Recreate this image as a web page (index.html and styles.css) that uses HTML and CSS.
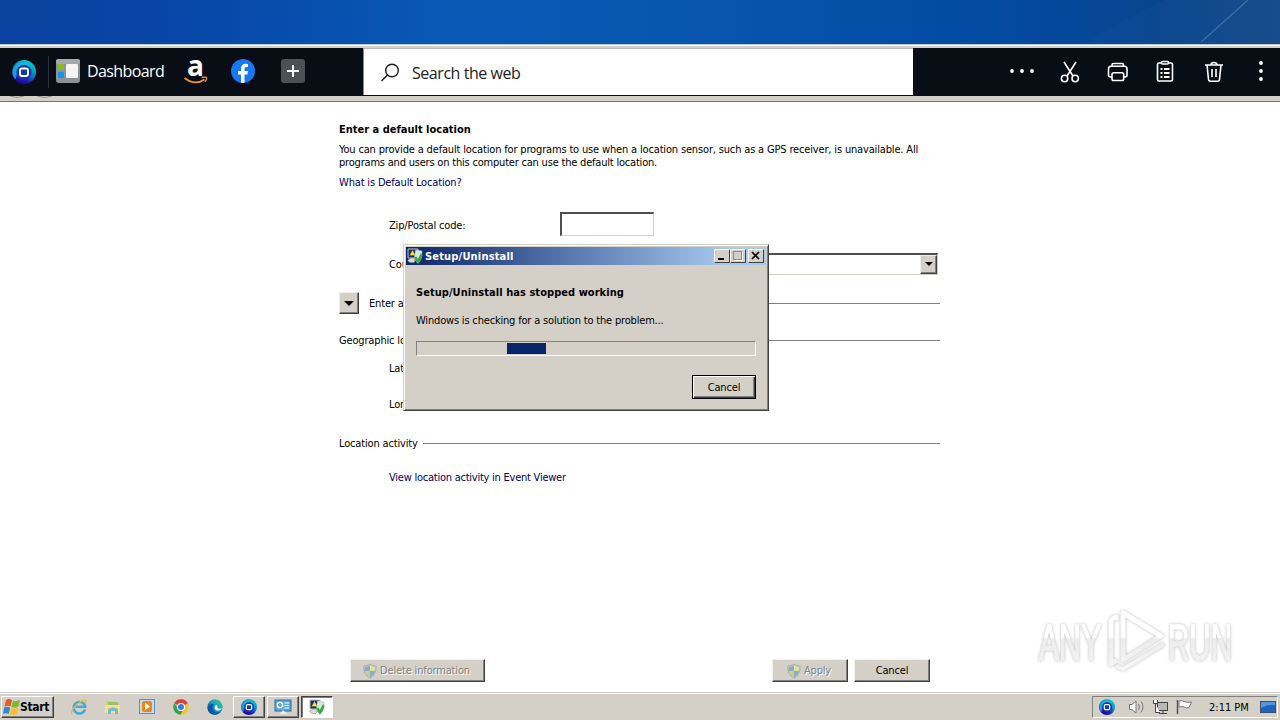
FILE: index.html
```html
<!DOCTYPE html>
<html lang="en">
<head>
    <meta charset="UTF-8">
    <meta name="viewport" content="width=device-width, initial-scale=1.0">
    <title>Default Location</title>
    <link rel="stylesheet" href="styles.css">
</head>
<body>
    <!-- shared icons -->
    <svg class="defs" width="0" height="0">
        <defs>
            <linearGradient id="ring" x1="0.8" y1="0" x2="0.3" y2="1">
                <stop offset="0" stop-color="#08d5cd"/>
                <stop offset="0.5" stop-color="#087fc2"/>
                <stop offset="0.8" stop-color="#2414a8"/>
                <stop offset="1" stop-color="#180888"/>
            </linearGradient>
            <linearGradient id="edge-g" x1="0" y1="1" x2="1" y2="0">
                <stop offset="0" stop-color="#0b58b0"/>
                <stop offset="0.5" stop-color="#1596c8"/>
                <stop offset="1" stop-color="#52cf72"/>
            </linearGradient>
            <linearGradient id="mark-g" gradientUnits="userSpaceOnUse" x1="0" y1="4" x2="0" y2="68">
                <stop offset="0.46" stop-color="#ffffff"/>
                <stop offset="0.48" stop-color="#ececec"/>
                <stop offset="1" stop-color="#f6f6f6"/>
            </linearGradient>
        </defs>
        <symbol id="browser" viewBox="0 0 24 24">
            <circle cx="12" cy="12" r="12" fill="url(#ring)"/>
            <path d="M0.500 14C0 4 12 -2 20 6C12 3 5 8 4 19C2 18 1 16 0.500 14Z" fill="#1fb4e0" opacity="0.8"/>
            <circle cx="12" cy="12.500" r="7.500" fill="#1532ab"/>
            <rect x="8" y="8.500" width="8" height="7.500" rx="2" fill="#1238a8" stroke="#fff" stroke-width="1.900"/>
        </symbol>
        <symbol id="shield" viewBox="0 0 16 16">
            <path d="M8 1C6 2.500 4 3 2 3C1.500 9 4 13 8 15C12 13 14.500 9 14 3C12 3 10 2.500 8 1Z" fill="#c5c9c4" stroke="#a9aca8"/>
            <path d="M8 2.500V8H3V4C5 4 7 3 8 2.500Z" fill="#88abc6"/>
            <path d="M8 8H13C12.500 11 10.500 12.800 8 14Z" fill="#88abc6"/>
            <path d="M8 2.500V8H13V4C11 4 9 3 8 2.500Z" fill="#dde2a0"/>
            <path d="M8 8H3C3.500 11 5.500 12.800 8 14Z" fill="#bfd58b"/>
        </symbol>
        <symbol id="setup" viewBox="0 0 16 16">
            <path d="M1 1H11V10H1Z" fill="#14286a" stroke="#c3c6cf"/>
            <path d="M0.500 12.500L4 10H9L7 14.500H3Z" fill="#dedccf" stroke="#8d8d83" stroke-width="0.600"/>
            <path d="M5.500 2L8.500 7.500H2.500Z" fill="#ffe13a" stroke="#5a4c00" stroke-width="0.400"/>
            <path d="M8.500 2Q12 2 15 3V8Q14 13 11 15.500Q8 13 7.500 9Z" fill="#d6eadb" stroke="#9dbba5" stroke-width="0.500"/>
            <path d="M7 9.500L9.500 8.500L10.800 11L14 5L15.500 7Q14.500 12 11 15.500Q8.500 13 7 9.500Z" fill="#3da64c"/>
        </symbol>
    </svg>

    <div class="wallpaper">
        <svg width="1280" height="44" viewBox="0 0 1280 44">
            <path d="M1085 44Q1120 20 1165 0H1280V44Z" fill="#fff" opacity="0.02"/>
            <path d="M1201 42Q1226 20 1248 0" fill="none" stroke="#6f9fcb" stroke-width="1.500" opacity="0.4"/>
        </svg>
    </div>
    <div class="window-edge"></div>

    <div class="toolbar">
        <div class="toolbar-left">
            <svg class="logo" width="24" height="24"><use href="#browser"/></svg>
            <span class="separator"></span>
            <svg class="dash-icon" width="24" height="24" viewBox="0 0 24 24">
                <rect width="24" height="24" rx="3" fill="#8d9299"/>
                <rect width="24" height="5" rx="2" fill="#a5a9af"/>
                <rect x="2" y="5" width="6" height="6" rx="1" fill="#84bd1d"/>
                <rect x="2" y="13" width="6" height="6" rx="1" fill="#1495ed"/>
                <rect x="10" y="5" width="12" height="14" rx="1" fill="#f5f4f2"/>
            </svg>
            <span class="dashboard">Dashboard</span>
            <svg class="amazon" width="24" height="48" viewBox="0 -11 24 48">
                <text x="3" y="16.500" class="amazon-letter" textLength="17" lengthAdjust="spacingAndGlyphs">a</text>
                <path d="M0.500 19Q11 27 20.500 20.500" fill="none" stroke="#f0981e" stroke-width="1.700"/>
                <path d="M17.500 18.500Q22.500 17.700 22.700 18.900Q22.800 20.700 21 22.700" fill="none" stroke="#f0981e" stroke-width="1.300"/>
            </svg>
            <svg class="facebook" width="24" height="24" viewBox="0 0 24 24">
                <circle cx="12" cy="12" r="12" fill="#1877f2"/>
                <path d="M10 24V15.500H7V12H10V9.500C10 6.300 11.800 4.700 14.700 4.700L17 4.900V8H15.400C13.900 8 13.500 8.900 13.500 9.900V12H17L16.400 15.500H13.500V24Z" fill="#fff"/>
            </svg>
            <svg class="add" width="24" height="24" viewBox="0 0 24 24">
                <rect width="24" height="24" rx="3" fill="#4c5057"/>
                <path d="M12 6V18M6 12H18" stroke="#fff" stroke-width="2"/>
            </svg>
        </div>
        <div class="search">
            <svg width="20" height="20" viewBox="0 0 20 20" fill="none" stroke="#1a1a1a" stroke-width="1.400">
                <circle cx="12" cy="7.500" r="6.300"/>
                <path d="M7.500 12L1.500 18"/>
            </svg>
            <span>Search the web</span>
        </div>
        <div class="toolbar-right">
            <svg width="26" height="24" viewBox="0 0 26 24" fill="#fff">
                <circle cx="3" cy="11" r="1.900"/><circle cx="13" cy="11" r="1.900"/><circle cx="23" cy="11" r="1.900"/>
            </svg>
            <svg class="cut" width="20" height="24" viewBox="0 0 20 24" fill="none" stroke="#fff" stroke-width="1.600">
                <path d="M4 2L13 16M16 2L7 16"/>
                <circle cx="4.600" cy="18.500" r="3.200"/>
                <circle cx="15.200" cy="18.500" r="3.200"/>
            </svg>
            <svg class="print" width="22" height="24" viewBox="0 0 22 24" fill="none" stroke="#fff" stroke-width="1.600">
                <path d="M5 6V5Q5 3.500 6.500 3.500H15Q16.500 3.500 16.500 5V6"/>
                <path d="M5 17H3.500Q1.500 17 1.500 15V9Q1.500 6.200 4 6.200H17.500Q20 6.200 20 9V15Q20 17 18 17H16.700"/>
                <rect x="5" y="12.800" width="11.700" height="7.700" rx="1.800"/>
            </svg>
            <svg class="paste" width="18" height="24" viewBox="0 0 18 24" fill="none" stroke="#fff" stroke-width="1.600">
                <rect x="1.500" y="3" width="15" height="18" rx="1.500"/>
                <rect x="5.500" y="1.500" width="7" height="2.500" rx="1" fill="#090d16"/>
                <path d="M4.500 9H6.500M4.500 13H6.500M4.500 17H6.500M8 9H13.500M8 13H13.500M8 17H13.500" stroke-width="1.800"/>
            </svg>
            <svg class="trash" width="20" height="24" viewBox="0 0 20 24" fill="none" stroke="#fff" stroke-width="1.600">
                <path d="M1 5H19M7 5Q7 2.500 10 2.500Q13 2.500 13 5M3 5L4.500 19.500Q4.700 21.300 6.500 21.300H13.500Q15.300 21.300 15.500 19.500L17 5M8 9V17M12 9V17"/>
            </svg>
            <svg class="more" width="6" height="24" viewBox="0 0 6 24" fill="#fff">
                <circle cx="3" cy="3" r="1.900"/><circle cx="3" cy="11" r="1.900"/><circle cx="3" cy="19" r="1.900"/>
            </svg>
        </div>
    </div>

    <div class="nav-strip">
        <svg width="60" height="4" viewBox="0 0 60 4" fill="none" stroke="#8b8b87">
            <path d="M10 0Q17 3 24 0M37 0Q45 3 52 0"/>
        </svg>
    </div>

    <div class="page">
        <h1>Enter a default location</h1>
        <p class="description">You can provide a default location for programs to use when a location sensor, such as a GPS receiver, is unavailable. All<br><span class="line-two">programs and users on this computer can use the default location.</span></p>
        <a class="help-link">What is Default Location?</a>

        <div class="form">
            <div class="field zip"><label>Zip/Postal code:</label><span class="text-box"></span></div>
            <div class="field country"><label>Country:</label><span class="combo"><span class="combo-button"><i class="arrow"></i></span></span></div>
            <div class="section"><span class="expander"><i class="arrow big"></i></span><span>Enter address</span><hr></div>
            <div class="section"><span>Geographic location</span><hr></div>
            <div class="field"><label>Latitude:</label></div>
            <div class="field"><label>Longitude:</label></div>
            <div class="section"><span class="activity">Location activity</span><hr></div>
            <div class="field"><a class="event-link">View location activity in Event Viewer</a></div>
        </div>

        <div class="actions">
            <div class="button disabled delete"><svg width="16" height="16"><use href="#shield"/></svg><span>Delete information</span></div>
            <div class="button disabled apply"><svg width="16" height="16"><use href="#shield"/></svg><span>Apply</span></div>
            <div class="button cancel"><span>Cancel</span></div>
        </div>
    </div>

    <div class="taskbar">
        <div class="start">
            <svg width="18" height="18" viewBox="0 0 18 18">
                <path d="M4 2Q7 0 10 2L8.500 8.500Q6 7 2.500 8.500Z" fill="#ea5a24"/>
                <path d="M11 2.500Q14 4 18 2L16.500 8.500Q13 10.500 9.500 9Z" fill="#7fb832"/>
                <path d="M2.200 9.500Q5.500 8 8.200 9.800L6.700 16Q4 14.500 1 15.800Z" fill="#3388d5"/>
                <path d="M9.200 10Q12.500 11.500 16.200 9.600L14.700 16Q11 17.700 7.700 16.200Z" fill="#f8c02c"/>
            </svg>
            <span>Start</span>
        </div>
        <div class="quick">
            <svg width="18" height="18" viewBox="0 0 18 18">
                <path d="M15 11.500A5.800 5.800 0 1 1 15.200 8.800H5.500" fill="none" stroke="#43a9df" stroke-width="2.500"/>
                <path d="M2.500 15.500Q0 16 3 11Q8 4 14.500 2.200Q17.500 2 15.500 5" fill="none" stroke="#e8b83b" stroke-width="1.200"/>
            </svg>
            <svg width="18" height="18" viewBox="0 0 18 18">
                <path d="M2 3H7L8 5H15V14H2Z" fill="#e8c766"/>
                <path d="M4 4H14V8H4Z" fill="#93c46b"/>
                <path d="M1 7H16V15H1Z" fill="#f6e08f"/>
                <path d="M4 16V11Q9 8 14 11V16H11V13H7V16Z" fill="#75b7de"/>
            </svg>
            <svg width="18" height="18" viewBox="0 0 18 18">
                <rect x="1.500" y="1.500" width="15" height="14" fill="#bfdcef" stroke="#5c91bd"/>
                <rect x="4" y="3" width="10" height="11" rx="2" fill="#ef8518"/>
                <path d="M7 5L12 8.500L7 12Z" fill="#fff"/>
            </svg>
            <svg width="18" height="18" viewBox="0 0 18 18">
                <circle cx="9" cy="9" r="7.700" fill="#f6c522"/>
                <path d="M9 9L2.200 5.200A7.700 7.700 0 0 1 15.800 5.300Z" fill="#dc4036"/>
                <path d="M2.300 5.200A7.700 7.700 0 0 0 8.500 16.700L12 10.500L9 9H5Z" fill="#35a153"/>
                <circle cx="9" cy="9" r="4" fill="#fff"/><circle cx="9" cy="9" r="3" fill="#3879e4"/>
            </svg>
            <svg width="18" height="18" viewBox="0 0 18 18">
                <circle cx="9" cy="9" r="7.700" fill="url(#edge-g)"/>
                <path d="M1.500 10Q3 5 8 6Q5 9 8 13Q10 16 15 13Q12 17 8 16.700Q2 16 1.500 10Z" fill="#0c57a6"/>
                <path d="M9 8Q11 6 11.500 8.500Q11 11 16 10.500Q13 14 9.500 12Q7.500 10 9 8Z" fill="#d5eee4"/>
            </svg>
        </div>
        <div class="tasks">
            <div class="task"><svg width="16" height="16"><use href="#browser"/></svg></div>
            <div class="task">
                <svg width="18" height="16" viewBox="0 0 18 16">
                    <rect x="1" y="1" width="16" height="11" fill="#5ba8dc" stroke="#2b6c9f"/>
                    <circle cx="6" cy="6" r="2.700" fill="none" stroke="#fff" stroke-width="1.300"/>
                    <path d="M10.500 4H15M10.500 6.500H15M10.500 9H15" stroke="#fff"/>
                    <path d="M6 15L9 11L13 15Z" fill="#e8f0f4"/>
                </svg>
            </div>
            <div class="task active"><svg width="16" height="16"><use href="#setup"/></svg></div>
        </div>
        <div class="tray">
            <svg width="16" height="16"><use href="#browser"/></svg>
            <svg class="volume" width="18" height="16" viewBox="0 0 18 16" fill="none" stroke="#77777a">
                <path d="M1.500 5.500H4L8 2V14L4 10.500H1.500Z" fill="#fff"/>
                <path d="M10.500 5Q12.500 8 10.500 11M13 2.500Q17 8 13 13.500"/>
            </svg>
            <svg class="network" width="17" height="16" viewBox="0 0 17 16">
                <rect x="5.500" y="3.500" width="10" height="8" fill="#b8b8b8" stroke="#454545"/>
                <path d="M7 14.500H15M11 12V14" stroke="#454545"/>
                <path d="M1.500 1V4.500H5.500V1M3.500 4.500V13.500H8" fill="#fff" stroke="#444"/>
            </svg>
            <svg width="17" height="16" viewBox="0 0 17 16">
                <path d="M1.500 1V15" stroke="#555" stroke-width="1.500"/>
                <path d="M3 2Q6 1 8 2.500Q11 4 15.500 3L13 8.500Q10 9.500 8 8Q6 7 3 8Z" fill="#fff" stroke="#77777a"/>
            </svg>
            <span class="clock">2:11 PM</span>
            <svg class="show-desktop" width="16" height="14" viewBox="0 0 16 14">
                <rect x="0.500" y="1.500" width="15" height="11" fill="#1e63bd" stroke="#3d4f69"/>
                <path d="M1 2H15V5Q8 4 1 8Z" fill="#529add"/>
            </svg>
        </div>
    </div>

    <div class="dialog">
        <div class="title-bar">
            <svg width="16" height="16"><use href="#setup"/></svg>
            <span class="title">Setup/Uninstall</span>
            <span class="caption-button"><svg width="12" height="10"><path d="M2 8H8" stroke="#000" stroke-width="2"/></svg></span>
            <span class="caption-button max"><svg width="12" height="10" fill="none" stroke="#8b8b87"><rect x="1.500" y="0.500" width="8" height="8"/><path d="M2.500 9.500H10.500V1" stroke="#fff"/></svg></span>
            <span class="caption-button close"><svg width="12" height="10"><path d="M2 1L9 8M9 1L2 8" stroke="#000" stroke-width="1.700"/></svg></span>
        </div>
        <div class="dialog-body">
            <div class="dialog-heading">Setup/Uninstall has stopped working</div>
            <div class="dialog-text">Windows is checking for a solution to the problem...</div>
            <div class="progress"><div class="progress-block"></div></div>
            <div class="button default"><span>Cancel</span></div>
        </div>
    </div>

    <svg class="watermark" width="210" height="74" viewBox="0 0 210 74">
        <g class="mark-text">
            <text x="9" y="56" textLength="62" lengthAdjust="spacingAndGlyphs">ANY</text>
            <text x="138" y="56" textLength="64" lengthAdjust="spacingAndGlyphs">RUN</text>
        </g>
        <g class="mark-logo" fill="none" stroke="url(#mark-g)" stroke-width="5" stroke-linejoin="round">
            <path d="M88 13L84 14Q81 15 81 19V60L87 56"/>
            <path d="M93 9V56L131 32Z"/>
            <path d="M86 62L93 65L134 40" stroke-width="4"/>
        </g>
    </svg>
</body>
</html>
```
FILE: styles.css
```css
* {
    box-sizing: border-box;
}
body {
    display: flex;
    flex-direction: column;
    width: 1280px;
    height: 720px;
    margin: 0;
    overflow: hidden;
    background-color: #fff;
    font-family: "DejaVu Sans Condensed", "DejaVu Sans", sans-serif;
    font-size: 11px;
    letter-spacing: -0.16px;
    color: #000;
    white-space: nowrap;
}
svg {
    display: block;
    flex: none;
}
.defs {
    position: absolute;
}
.wallpaper {
    flex: none;
    height: 44px;
    background: linear-gradient(90deg, #0b429f 0%, #0747a7 15%, #0959b5 35%, #0858b0 50%, #034aa1 78%, #08458f 90%, #134a87 100%);
}
.window-edge {
    flex: none;
    height: 4px;
    background-color: #d4d0c8;
    border-top: 1px solid #b9c9d8;
    box-shadow: inset 0 1px 0 #fff;
}

/* Browser toolbar */
.toolbar {
    display: flex;
    flex: none;
    height: 48px;
    background-color: #090d16;
    font-family: "Open Sans", "Noto Sans", sans-serif;
    font-size: 16px;
    color: #fff;
}
.toolbar-left {
    display: flex;
    align-items: center;
    width: 363px;
    padding-left: 12px;
}
.separator {
    width: 1px;
    height: 32px;
    margin: 0 7px 0 12px;
    background-color: #2b303a;
}
.dash-icon {
    margin-top: -2px;
}
.dashboard {
    width: 77px;
    margin: -2px 0 0 7px;
    letter-spacing: -0.6px;
}
.amazon {
    margin-left: 20px;
    overflow: visible;
}
.amazon-letter {
    font: bold 29px "Open Sans", sans-serif;
    letter-spacing: 0;
    fill: #fff;
}
.facebook {
    margin: -2px 0 0 23px;
}
.add {
    margin: -2px 0 0 26px;
}
.search {
    display: flex;
    align-items: center;
    gap: 12px;
    width: 550px;
    height: 47px;
    padding: 1px 0 0 16px;
    background-color: #fff;
    border-top: 1px solid #bbb;
    border-left: 1px solid #888;
    color: #222;
    letter-spacing: -0.45px;
}
.toolbar-right {
    display: flex;
    flex: 1;
    align-items: center;
    padding-left: 96px;
}
.cut {
    margin-left: 25px;
}
.print {
    margin-left: 27px;
}
.paste {
    margin-left: 27px;
}
.trash {
    margin-left: 30px;
}
.more {
    margin-left: 34px;
}
.nav-strip {
    flex: none;
    height: 6px;
    background-color: #d4d0c8;
    border-bottom: 1px solid #777570;
}

/* Default location page */
.page {
    display: flex;
    flex: 1;
    flex-direction: column;
    width: 940px;
    padding: 21px 0 0 339px;
}
h1 {
    margin: 0;
    font-size: 11px;
    line-height: 14px;
    letter-spacing: 0;
}
.description {
    margin: 6px 0 7px;
    line-height: 13px;
}
.line-two {
    letter-spacing: -0.2px;
}
.help-link,
.event-link {
    color: #000066;
}
.help-link {
    line-height: 14px;
}
.event-link {
    letter-spacing: -0.24px;
}
.form {
    display: grid;
    grid-template-rows: 39px 39px 40px 34px 22px 50px 28px 40px;
    margin-top: 15px;
}
.field {
    display: flex;
    align-items: center;
    padding-left: 50px;
}
.field label {
    width: 171px;
}
.zip label,
.country label {
    padding-top: 2px;
}
.text-box,
.combo {
    height: 24px;
    border: 1px solid #d4d0c8;
    border-top: 2px solid #504e4b;
    border-left: 2px solid #504e4b;
}
.text-box {
    width: 94px;
    margin-bottom: 1px;
}
.combo {
    display: flex;
    justify-content: flex-end;
    width: 378px;
    height: 22px;
}
.combo-button,
.expander {
    display: flex;
    align-items: center;
    justify-content: center;
    background-color: #d4d0c8;
    border: 1px solid #f0eeea;
    border-right-color: #404040;
    border-bottom-color: #404040;
    box-shadow: inset -1px -1px 0 #808080;
}
.combo-button {
    width: 17px;
}
.expander {
    width: 20px;
    height: 22px;
    margin-right: 10px;
}
.arrow {
    border: 4px solid transparent;
    border-top-color: #000;
    border-bottom: 0;
}
.arrow.big {
    border-width: 5px 5px 0;
}
.section {
    display: flex;
    align-items: center;
}
.section hr {
    flex: 1;
    height: 1px;
    margin: 0 0 0 5px;
    border: 0;
    background-color: #808080;
}
.actions {
    display: flex;
    margin: auto 10px 10px 11px;
}
.button {
    display: flex;
    align-items: center;
    justify-content: center;
    gap: 2px;
    height: 23px;
    background-color: #d4d0c8;
    border: 1px solid #f4f2ee;
    border-right-color: #404040;
    border-bottom-color: #404040;
    box-shadow: inset -1px -1px 0 #808080;
}
.button.disabled {
    padding-right: 3px;
    color: #808080;
    text-shadow: 1px 1px 0 #fff;
}
.delete {
    width: 135px;
}
.apply {
    width: 76px;
    margin-left: auto;
}
.cancel {
    width: 76px;
    margin-left: 6px;
}

/* Taskbar */
.taskbar {
    display: flex;
    flex: none;
    align-items: center;
    height: 28px;
    padding: 1px 2px 0 1px;
    background-color: #d4d0c8;
    border-top: 1px solid #d4d0c8;
    box-shadow: inset 0 1px 0 #fff;
}
.start {
    display: flex;
    align-items: center;
    width: 53px;
    height: 22px;
    border: 1px solid #fff;
    border-right-color: #404040;
    border-bottom-color: #404040;
    box-shadow: inset -1px -1px 0 #808080;
    font-weight: bold;
    font-size: 12px;
    letter-spacing: -0.3px;
}
.quick {
    display: flex;
    gap: 16px;
    margin-left: 16px;
}
.tasks {
    display: flex;
    gap: 2px;
    margin-left: 9px;
}
.task {
    display: flex;
    align-items: center;
    justify-content: center;
    width: 32px;
    height: 22px;
    border: 1px solid #fff;
    border-right-color: #404040;
    border-bottom-color: #404040;
    box-shadow: inset -1px -1px 0 #808080;
}
.task.active {
    background-color: #fff;
    border-color: #404040 #fff #fff #404040;
    box-shadow: inset 1px 1px 0 #808080;
}
.tray {
    display: flex;
    align-items: center;
    width: 186px;
    height: 22px;
    margin-left: auto;
    padding-left: 6px;
    border: 1px solid #808080;
    border-right-color: #fff;
    border-bottom-color: #fff;
}
.tray svg + svg {
    margin-left: 7px;
}
.tray svg.volume {
    margin-left: 13px;
}
.tray svg.network {
    margin-left: 6px;
}
.clock {
    margin: 0 auto 0 16px;
    letter-spacing: 0;
}
.show-desktop {
    margin-right: 1px;
}

/* Error dialog */
.dialog {
    position: absolute;
    left: 403px;
    top: 244px;
    width: 366px;
    height: 167px;
    padding: 2px;
    background-color: #d4d0c8;
    border: 1px solid #d4d0c8;
    border-right: 1px solid #404040;
    border-bottom: 1px solid #404040;
    box-shadow: inset 1px 1px 0 #fff, inset -1px -1px 0 #808080;
}
.title-bar {
    display: flex;
    align-items: center;
    height: 18px;
    padding: 0 2px 0 1px;
    background: linear-gradient(90deg, #0a246a, #a6caf0 90%);
    color: #fff;
    font-weight: bold;
}
.title {
    margin: 0 auto 0 2px;
    letter-spacing: 0.18px;
}
.caption-button {
    display: flex;
    align-items: center;
    justify-content: center;
    width: 16px;
    height: 14px;
    background-color: #d4d0c8;
    border: 1px solid #fff;
    border-right-color: #404040;
    border-bottom-color: #404040;
}
.close {
    margin-left: 2px;
}
.dialog-body {
    padding: 21px 10px 0;
}
.dialog-heading {
    font-weight: bold;
    line-height: 14px;
    letter-spacing: 0.05px;
}
.dialog-text {
    margin-top: 14px;
    line-height: 14px;
    letter-spacing: -0.18px;
}
.progress {
    width: 340px;
    height: 15px;
    margin-top: 13px;
    padding: 1px 0 1px 90px;
    border: 1px solid #808080;
    border-right-color: #fff;
    border-bottom-color: #fff;
}
.progress-block {
    width: 39px;
    height: 11px;
    background-color: #0a246a;
}
.button.default {
    width: 64px;
    height: 24px;
    margin: 19px 0 0 auto;
    border: 1px solid #000;
    box-shadow: inset 1px 1px 0 #fff, inset -1px -1px 0 #404040, inset -2px -2px 0 #808080;
}

/* Corner watermark */
.watermark {
    position: absolute;
    left: 1030px;
    top: 604px;
    overflow: visible;
    filter: drop-shadow(0 0 1.5px rgba(0, 0, 0, 0.28));
}
.mark-text {
    font-family: "Liberation Sans Narrow", "Liberation Sans", sans-serif;
    font-size: 50px;
    letter-spacing: 0;
    fill: url(#mark-g);
    stroke: url(#mark-g);
    stroke-width: 1.5px;
}
```
